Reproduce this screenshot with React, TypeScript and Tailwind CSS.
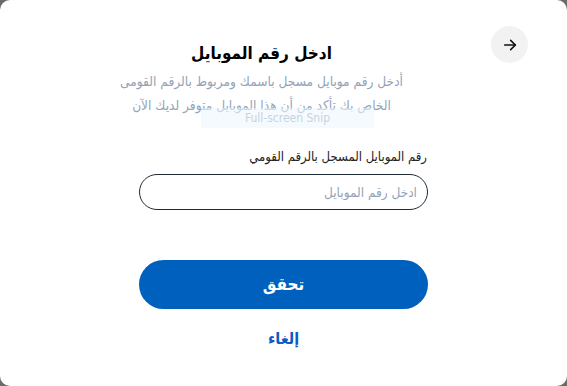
export default function App() {
  return (
    <div className="h-[386px] w-[567px] bg-[#6b6b6b] overflow-hidden">
      <div
        dir="rtl"
        className="relative h-full w-full bg-white rounded-[10px] flex flex-col"
        style={{ fontFamily: '"DejaVu Sans Condensed", "DejaVu Sans", sans-serif' }}
      >
        <div className="flex flex-row items-start pt-[26px] pr-[39px] pl-8">
          <button className="w-[37px] h-[37px] rounded-full bg-[#f2f2f2] flex items-center justify-center shrink-0">
            <svg width="16" height="16" viewBox="0 0 24 24" fill="none" stroke="#111" strokeWidth="2.4" strokeLinecap="round" strokeLinejoin="round">
              <path d="M4 12h16" />
              <path d="M13 5l7 7-7 7" />
            </svg>
          </button>
          <div className="flex-1 flex flex-col items-center pt-[13px]">
            <h1 className="text-[17px] font-bold text-black leading-[28px]">ادخل رقم الموبايل</h1>
            <p className="mt-[2px] text-[13.6px] leading-[24px] text-[#94a3b8] text-center whitespace-nowrap">
              أدخل رقم موبايل مسجل باسمك ومربوط بالرقم القومى
              <br />
              الخاص بك تأكد من أن هذا الموبايل متوفر لديك الآن
            </p>
          </div>
        </div>

        <div className="w-[289px] mx-auto mt-[30px] flex flex-col">
          <label className="text-[13px] text-[#222] leading-[20px] pr-[1px]">رقم الموبايل المسجل بالرقم القومي</label>
          <input
            placeholder="ادخل رقم الموبايل"
            className="mt-[7px] h-[36px] w-full rounded-full border border-[#1f2a37] px-[10px] text-[13.5px] placeholder:text-[#94a3b8] outline-none"
          />
          <button className="mt-[50px] h-[49px] w-full rounded-full bg-[#0060be] text-white text-[17px] font-bold">
            تحقق
          </button>
          <button className="mt-[18px] self-center text-[16px] font-bold text-[#0b5bc9]">إلغاء</button>
        </div>

        <div className="absolute left-[201px] top-[108px] w-[173px] h-[20px] bg-[#eef6fd]/60 flex items-center justify-center text-[12px] text-[#c8d3de]" dir="ltr">
          Full-screen Snip
        </div>
      </div>
    </div>
  )
}
